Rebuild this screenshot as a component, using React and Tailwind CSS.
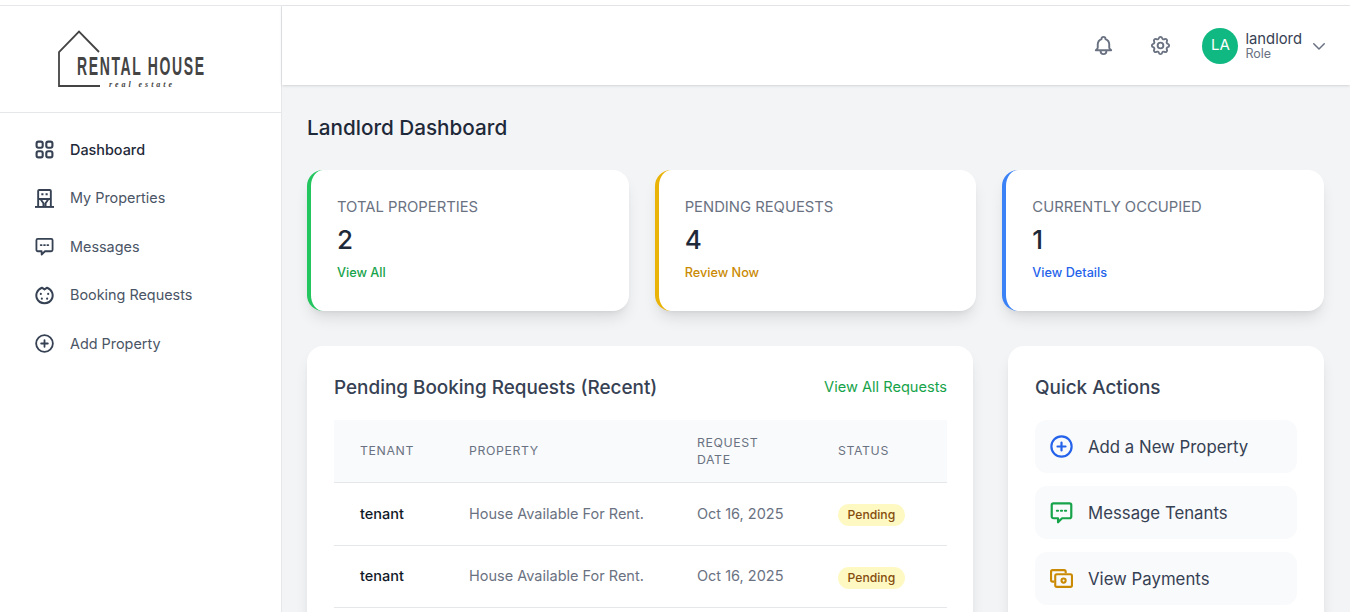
import { HiOutlineBell, HiOutlineChevronDown, HiOutlineCog } from 'react-icons/hi';

const font = { fontFamily: 'Inter, "Noto Sans", sans-serif' };

const DashIcon = ({ className }) => (
  <svg viewBox="0 0 18 18" fill="none" stroke="currentColor" strokeWidth="2" className={className}>
    <rect x="1.500" y="1.500" width="5.800" height="5.800" rx="1.800" />
    <rect x="10.700" y="1.500" width="5.800" height="5.800" rx="1.800" />
    <rect x="1.500" y="10.700" width="5.800" height="5.800" rx="1.800" />
    <rect x="10.700" y="10.700" width="5.800" height="5.800" rx="1.800" />
  </svg>
);

const BuildingIcon = ({ className }) => (
  <svg viewBox="0 0 18 18" fill="none" stroke="currentColor" strokeWidth="1.800" className={className}>
    <path d="M0 17h18" />
    <path d="M3 17V2a1 1 0 0 1 1-1h10a1 1 0 0 1 1 1v15" />
    <path d="M6 5h2M10 5h2" strokeWidth="1.800" />
    <path d="M3 9.500h12M5.500 10l2.500 3.500V17M12.500 10 10 13.500V17" strokeWidth="1.800" />
  </svg>
);

const ChatIcon = ({ className }) => (
  <svg viewBox="0 0 20 20" fill="none" stroke="currentColor" strokeWidth="1.900" strokeLinejoin="round" className={className}>
    <path d="M3 2h14a1.500 1.500 0 0 1 1.500 1.500v10A1.500 1.500 0 0 1 17 15h-6.500L7 18.500V15H3a1.500 1.500 0 0 1-1.500-1.500v-10A1.500 1.500 0 0 1 3 2z" />
    <path d="M6 8.500h1M9.500 8.500h1M13 8.500h1" strokeLinecap="round" />
  </svg>
);

const BookingIcon = ({ className }) => (
  <svg viewBox="0 0 18 18" fill="none" className={className}>
    <path d="M6.500 1.600a8 8 0 0 0-4.800 4.800 8 8 0 0 0 0 5.200 8 8 0 0 0 14.600 0 8 8 0 0 0 0-5.200 8 8 0 0 0-4.800-4.800L9 3.200z" stroke="currentColor" strokeWidth="1.900" strokeLinejoin="round" />
    <g fill="currentColor">
      <circle cx="5.500" cy="7.500" r="1" />
      <circle cx="12.500" cy="7.500" r="1" />
      <circle cx="6.500" cy="12" r="1" />
      <circle cx="11.500" cy="12" r="1" />
    </g>
  </svg>
);

const PlusCircle = ({ className }) => (
  <svg viewBox="0 0 20 20" fill="none" stroke="currentColor" strokeWidth="1.900" strokeLinecap="round" className={className}>
    <circle cx="10" cy="10" r="8.800" />
    <path d="M10 6.500v7M6.500 10h7" />
  </svg>
);

const MoneyIcon = ({ className }) => (
  <svg viewBox="0 0 22 18" fill="none" stroke="currentColor" strokeWidth="2" strokeLinejoin="round" className={className}>
    <path d="M4 12H2.500A1.500 1.500 0 0 1 1 10.500v-8A1.500 1.500 0 0 1 2.500 1h11A1.500 1.500 0 0 1 15 2.500V4" />
    <rect x="5" y="5" width="16" height="12" rx="1.500" />
    <circle cx="13" cy="11" r="2" />
  </svg>
);

const navItems = [
  { label: 'Dashboard', icon: DashIcon, active: true },
  { label: 'My Properties', icon: BuildingIcon },
  { label: 'Messages', icon: ChatIcon },
  { label: 'Booking Requests', icon: BookingIcon },
  { label: 'Add Property', icon: PlusCircle },
];

function Logo() {
  return (
    <svg viewBox="0 0 150 62" className="w-[150px] h-[62px]">
      <path d="M41 22 21 1.500 1 22v34h41" fill="none" stroke="#444" strokeWidth="1.800" />
      <text transform="translate(19 44.500) scale(.56 1)" textLength="227" lengthAdjust="spacing" fontFamily="Liberation Sans" fontWeight="700" fontSize="25" fill="#444">RENTAL HOUSE</text>
      <text x="51" y="57" textLength="63" fontFamily="Liberation Serif" fontStyle="italic" fontWeight="700" fontSize="8" fill="#444">real estate</text>
    </svg>
  );
}

function Sidebar() {
  return (
    <aside className="w-[282px] shrink-0 bg-white border-r border-gray-200">
      <div className="h-[107px] flex items-start pt-[24px] pl-[58px] border-b border-gray-200">
        <Logo />
      </div>
      <nav className="pt-[12.300px] pl-[35px]">
        {navItems.map(({ label, icon: Icon, active }) => (
          <div key={label} className={`h-[48.500px] flex items-center gap-[16px] text-[14.400px] ${active ? 'font-medium text-gray-800' : 'text-gray-600'}`}>
            <Icon className="w-[19px] h-[19px] text-gray-700" />
            <span>{label}</span>
          </div>
        ))}
      </nav>
    </aside>
  );
}

function Header() {
  return (
    <header className="h-[79px] shrink-0 bg-white shadow-sm flex items-center justify-end pr-[22px]">
      <HiOutlineBell className="w-[23px] h-[23px] text-gray-500 mr-[34px]" />
      <HiOutlineCog className="w-[23px] h-[23px] text-gray-500 mr-[30px]" />
      <div className="w-[36px] h-[36px] rounded-full bg-[#10b981] text-white flex items-center justify-center text-[15px]">LA</div>
      <div className="ml-[7px] mr-[8px] leading-none">
        <p className="text-[14.800px] text-gray-700 leading-[15px]">landlord</p>
        <p className="text-[12.500px] text-gray-500 leading-[13px]">Role</p>
      </div>
      <HiOutlineChevronDown className="w-[18px] h-[18px] text-gray-500" />
    </header>
  );
}

const stats = [
  { title: 'TOTAL PROPERTIES', value: 2, link: 'View All', border: 'border-[#22c55e]', text: 'text-[#16a34a]' },
  { title: 'PENDING REQUESTS', value: 4, link: 'Review Now', border: 'border-[#eab308]', text: 'text-[#ca8a04]' },
  { title: 'CURRENTLY OCCUPIED', value: 1, link: 'View Details', border: 'border-[#3b82f6]', text: 'text-[#2563eb]' },
];

function StatCard({ title, value, link, border, text }) {
  return (
    <div className={`h-[141px] bg-white rounded-2xl border-l-4 ${border} shadow-lg pl-[26px] pt-[28px]`}>
      <p className="text-[14.800px] leading-[18px] text-gray-500">{title}</p>
      <p className="text-[26px] leading-[32px] mt-[8px] font-medium text-gray-800">{value}</p>
      <p className={`text-[12.700px] leading-[16px] mt-[9px] font-medium ${text}`}>{link}</p>
    </div>
  );
}

function BookingTable() {
  const rows = ['h-[63px]', 'h-[62px]'];
  return (
    <table className="w-full table-fixed text-left">
      <thead className="bg-gray-50">
        <tr className="h-[62px] border-b border-gray-200 text-[12.300px] leading-[17px] tracking-wider text-gray-500">
          <th className="w-[109px] pl-[26px] font-normal">TENANT</th>
          <th className="w-[228px] pl-[26px] font-normal">PROPERTY</th>
          <th className="w-[141px] pl-[26px] pr-[40px] font-normal">REQUEST DATE</th>
          <th className="pl-[26px] font-normal">STATUS</th>
        </tr>
      </thead>
      <tbody>
        {rows.map((height) => (
          <tr key={height} className={`${height} border-b border-gray-200 text-[14.500px]`}>
            <td className="pl-[26px] font-medium text-gray-900">tenant</td>
            <td className="pl-[26px] text-gray-500 whitespace-nowrap">House Available For Rent.</td>
            <td className="pl-[26px] text-gray-500">Oct 16, 2025</td>
            <td className="pl-[26px]">
              <span className="inline-block mt-[3px] px-[9.500px] leading-[22px] rounded-full bg-[#fef9c3] text-[#854d0e] text-[12.200px] font-medium">Pending</span>
            </td>
          </tr>
        ))}
      </tbody>
    </table>
  );
}

const actions = [
  { label: 'Add a New Property', icon: PlusCircle, color: 'text-[#2563eb]' },
  { label: 'Message Tenants', icon: ChatIcon, color: 'text-[#16a34a]' },
  { label: 'View Payments', icon: MoneyIcon, color: 'text-[#ca8a04]' },
];

export default function App() {
  return (
    <div className="h-screen overflow-hidden bg-white pt-[5px]" style={font}>
      <div className="h-full flex border-t border-gray-200">
        <Sidebar />
        <div className="flex-1 min-w-0 flex flex-col bg-gray-100">
          <Header />
          <main className="pl-[25px] pr-[26px] pt-[29px]">
            <h1 className="text-[20.700px] leading-[28px] font-medium text-gray-800">Landlord Dashboard</h1>
            <div className="grid grid-cols-3 gap-[26px] mt-[28px]">
              {stats.map((s) => <StatCard key={s.title} {...s} />)}
            </div>
            <div className="flex justify-between mt-[35px]">
              <section className="w-[666px] bg-white rounded-2xl shadow-lg pl-[27px] pr-[26px] pt-[29px] pb-[24px]">
                <div className="flex items-center justify-between h-[26px] mb-[19px]">
                  <h2 className="text-[18.900px] font-medium text-gray-700">Pending Booking Requests (Recent)</h2>
                  <a className="text-[14.600px] text-[#16a34a]">View All Requests</a>
                </div>
                <BookingTable />
              </section>
              <section className="w-[316px] bg-white rounded-2xl shadow-lg px-[27px] pt-[29px] pb-[24px]">
                <h2 className="text-[18.900px] leading-[26px] font-medium text-gray-700 mb-[19px]">Quick Actions</h2>
                <div className="flex flex-col gap-[13px]">
                  {actions.map(({ label, icon: Icon, color }) => (
                    <div key={label} className="h-[53px] bg-gray-50 rounded-xl flex items-center pl-[15px] gap-[15px] text-[16.800px] text-gray-700">
                      <Icon className={`w-[23px] h-[23px] ${color}`} />
                      <span className="pt-[2px]">{label}</span>
                    </div>
                  ))}
                </div>
              </section>
            </div>
          </main>
        </div>
      </div>
    </div>
  );
}
